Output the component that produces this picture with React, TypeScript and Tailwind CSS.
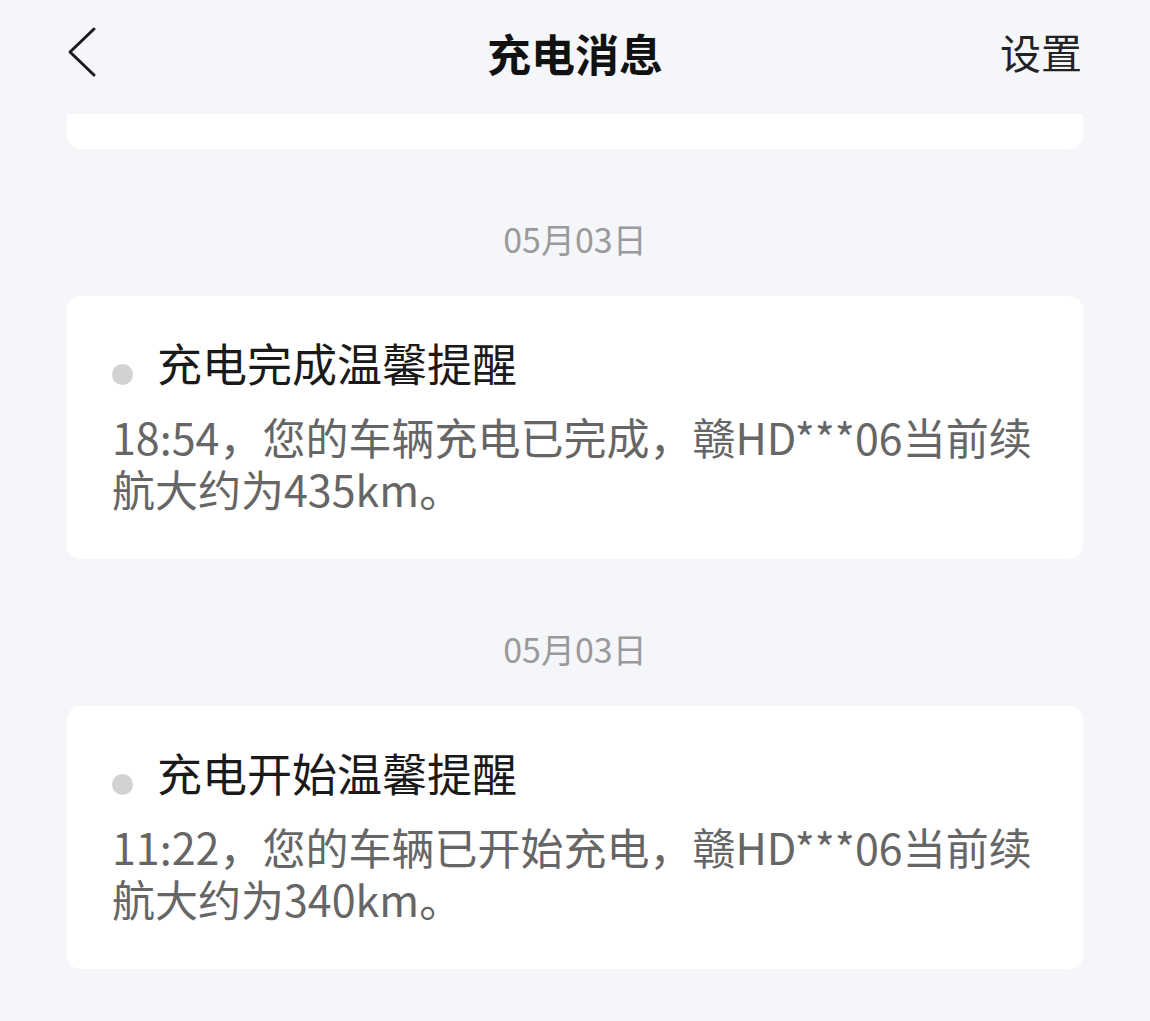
const font = {
  fontFamily: '"Noto Sans CJK SC", "Noto Sans", sans-serif',
};

interface Message {
  id: string;
  date: string;
  title: string;
  body: string;
}

const messages: Message[] = [
  {
    id: "done",
    date: "05月03日",
    title: "充电完成温馨提醒",
    body: "18:54，您的车辆充电已完成，赣HD***06当前续航大约为435km。",
  },
  {
    id: "start",
    date: "05月03日",
    title: "充电开始温馨提醒",
    body: "11:22，您的车辆已开始充电，赣HD***06当前续航大约为340km。",
  },
];

function BackIcon() {
  return (
    <svg width="32" height="52" viewBox="0 0 32 52" fill="none">
      <path d="M28 3 L4 26 L28 49" stroke="#1a1a1a" strokeWidth="3" strokeLinecap="round" strokeLinejoin="round" />
    </svg>
  );
}

export default function App() {
  return (
    <div className="min-h-[1021px] w-full bg-[#f5f6fa]" style={font}>
      <header className="relative flex h-[114px] items-start justify-between px-[68px] pt-[27px]">
        <button className="-ml-[2px] mt-[-1px] text-[#1a1a1a]">
          <BackIcon />
        </button>
        <h1 className="absolute left-1/2 top-[25px] -translate-x-1/2 text-[44px] font-bold leading-[56px] text-[#111]">
          充电消息
        </h1>
        <button className="-mt-[2px] text-[41px] leading-[52px] text-[#222]">设置</button>
      </header>

      <div className="mx-[67px] h-[35px] rounded-b-[14px] bg-white" />

      {messages.map((msg) => (
        <div key={msg.id}>
          <div className="pt-[76px] pb-[43px] text-center text-[34px] leading-[28px] text-[#9a9a9a]">
            {msg.date}
          </div>
          <section className="mx-[67px] rounded-[14px] bg-white pl-[45px] pr-[36px] pt-[41px] pb-[45px]">
            <div className="flex items-start gap-[24px]">
              <span className="mt-[27px] h-[21px] w-[21px] shrink-0 rounded-full bg-[#d2d2d2]" />
              <h2 className="text-[45px] leading-[52px] text-[#1a1a1a]">{msg.title}</h2>
            </div>
            <p className="mt-[21px] text-[43px] leading-[52px] text-[#666]">{msg.body}</p>
          </section>
        </div>
      ))}
    </div>
  );
}
